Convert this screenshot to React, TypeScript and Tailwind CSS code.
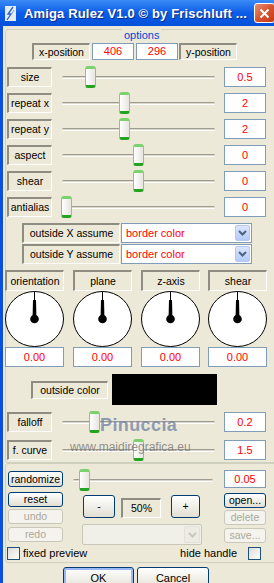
import React from 'react';

const sunken =
  'flex items-center justify-center border-t-2 border-l-2 border-r border-b border-t-[#8f8d82] border-l-[#8f8d82] border-r-white border-b-white text-[10.5px] leading-none text-black whitespace-nowrap';
const valueBox =
  'flex items-center justify-center border border-[#7F9DB9] bg-white text-[11px] leading-none text-[#FF0000]';
const xpBtn =
  'flex items-center justify-center rounded-[3px] border border-[#003C74] bg-gradient-to-b from-white to-[#E2DFD3] text-[10.5px] leading-none text-black';
const xpBtnOff =
  'flex items-center justify-center rounded-[3px] border border-[#C9C7BA] bg-[#F4F3EE] text-[10.5px] leading-none text-[#ACA899]';
const checkbox =
  'h-[13px] w-[13px] shrink-0 border border-[#1C5180] bg-gradient-to-br from-[#DCDCD7] to-white';

function Slider({ at, className }: { at: number; className: string }) {
  return (
    <div className={`relative flex h-[20px] shrink-0 items-center px-[4px] ${className}`}>
      <div className="h-[3px] w-full rounded-full border-t border-b border-t-[#9D9B91] border-b-white bg-[#DCD9CB]" />
      <div
        className="absolute top-[-1px] h-[22px] w-[11px] rounded-[3px] border-x border-t-[3px] border-b-[3px] border-x-[#AFAEA6] border-t-[#7BD16B] border-b-[#22A322] bg-gradient-to-r from-white to-[#E6E5DE]"
        style={{ left: at }}
      />
    </div>
  );
}

function SliderRow({ label, at, value, mt }: { label: string; at: number; value: string; mt: string }) {
  return (
    <div className={`ml-[1px] flex h-[20px] items-center ${mt}`}>
      <div className={`${sunken} h-[20px] w-[45px]`}>{label}</div>
      <Slider at={at} className="ml-[6px] w-[161px]" />
      <div className={`${valueBox} ml-[5px] h-[20px] w-[42px]`}>{value}</div>
    </div>
  );
}

function Chevron({ color }: { color: string }) {
  return (
    <svg width="9" height="6" viewBox="0 0 9 6">
      <path d="M1 1 L4.5 4.5 L8 1" fill="none" stroke={color} strokeWidth="2" />
    </svg>
  );
}

function Assume({ label, mt }: { label: string; mt: string }) {
  return (
    <div className={`ml-[16px] flex h-[20px] ${mt}`}>
      <div className={`${sunken} h-[20px] w-[98px]`}>{label}</div>
      <div className="ml-[1px] flex h-[20px] w-[131px] items-center border border-[#7F9DB9] bg-white pl-[4px] pr-[1px]">
        <span className="flex-1 text-[11px] leading-none text-[#FF0000]">border color</span>
        <div className="flex h-[16px] w-[15px] items-center justify-center rounded-[2px] border border-[#B5C8F3] bg-gradient-to-b from-[#DCE6FD] to-[#B3CAF8]">
          <Chevron color="#4D6185" />
        </div>
      </div>
    </div>
  );
}

function Dial() {
  return (
    <svg width="59" height="56" viewBox="0 0 59 56">
      <ellipse cx="29.5" cy="28" rx="29" ry="27.5" fill="white" stroke="black" />
      <line x1="29.5" y1="0.5" x2="29.5" y2="9" stroke="black" strokeWidth="1" />
      <path d="M28 9 H31 L31.4 25 H27.6 Z" fill="black" />
      <circle cx="29.5" cy="28" r="4.3" fill="black" />
    </svg>
  );
}

function DialCol({ label, ml }: { label: string; ml: string }) {
  return (
    <div className={`flex w-[59px] flex-col ${ml}`}>
      <div className={`${sunken} h-[21px] w-[59px]`}>{label}</div>
      <Dial />
      <div className={`${valueBox} h-[20px] w-[59px]`}>0.00</div>
    </div>
  );
}

function TitleBar() {
  return (
    <div className="flex h-[26px] shrink-0 items-center bg-gradient-to-b from-[#3A8AF6] via-[#0A5CE8] to-[#0552D9] pl-[5px]">
      <svg width="11" height="15" viewBox="0 0 11 15" className="shrink-0">
        <rect x="0" y="0" width="11" height="15" fill="#E4ECF8" />
        <path d="M8 1 L3 8 L6 8 L2 14" fill="none" stroke="#2F5FC8" strokeWidth="1.3" />
        <path d="M9 4 L6 9" stroke="#7FA0E0" strokeWidth="1" />
      </svg>
      <span className="ml-[8px] whitespace-nowrap text-[13px] font-bold leading-none tracking-[0.15px] text-white [text-shadow:1px_1px_#0A2A8A]">
        Amiga Rulez V1.0 © by Frischluft ...
      </span>
      <div className="ml-auto mr-[-1px] flex h-[20px] w-[21px] shrink-0 items-center justify-center rounded-[3px] border border-white bg-gradient-to-br from-[#E98D71] via-[#D8542F] to-[#C23A17]">
        <svg width="11" height="11" viewBox="0 0 11 11">
          <path d="M1.5 1.5 L9.5 9.5 M9.5 1.5 L1.5 9.5" stroke="white" strokeWidth="2" />
        </svg>
      </div>
    </div>
  );
}

function Options() {
  return (
    <div className="relative ml-[2px] mt-[3px] flex h-[434px] w-[275px] shrink-0 flex-col rounded-[3px] border border-[#D0D0BF]">
      <span className="absolute left-[116px] top-[-1px] bg-[#ECE9D8] px-[2px] text-[11px] leading-[13px] text-[#0046D5]">
        options
      </span>

      <div className="ml-[26px] mt-[13px] flex h-[17px]">
        <div className={`${sunken} h-[17px] w-[58px]`}>x-position</div>
        <div className={`${valueBox} ml-[2px] h-[17px] w-[42px]`}>406</div>
        <div className={`${valueBox} ml-[2px] h-[17px] w-[42px]`}>296</div>
        <div className={`${sunken} ml-[1px] h-[17px] w-[58px]`}>y-position</div>
      </div>

      <SliderRow label="size" at={27} value="0.5" mt="mt-[7px]" />
      <SliderRow label="repeat x" at={61} value="2" mt="mt-[6px]" />
      <SliderRow label="repeat y" at={61} value="2" mt="mt-[6px]" />
      <SliderRow label="aspect" at={75} value="0" mt="mt-[6px]" />
      <SliderRow label="shear" at={75} value="0" mt="mt-[6px]" />
      <SliderRow label="antialias" at={3} value="0" mt="mt-[6px]" />

      <Assume label="outside X assume" mt="mt-[6px]" />
      <Assume label="outside Y assume" mt="mt-[1px]" />

      <div className="mt-[6px] flex">
        <DialCol label="orientation" ml="ml-[-1px]" />
        <DialCol label="plane" ml="ml-[9px]" />
        <DialCol label="z-axis" ml="ml-[9px]" />
        <DialCol label="shear" ml="ml-[8px]" />
      </div>

      <div className="mt-[7px] flex h-[31px] items-center">
        <div className={`${sunken} ml-[25px] h-[18px] w-[77px]`}>outside color</div>
        <div className="ml-[4px] h-[31px] w-[105px] bg-black" />
      </div>

      <SliderRow label="falloff" at={31} value="0.2" mt="mt-[7px]" />
      <SliderRow label="f. curve" at={75} value="1.5" mt="mt-[8px]" />
    </div>
  );
}

function Actions() {
  return (
    <div className="ml-[2px] flex h-[100px] w-[275px] shrink-0 flex-col rounded-[3px] border border-[#D0D0BF]">
      <div className="mt-[6px] flex h-[18px] items-start">
        <div className={`${xpBtn} ml-[2px] mt-[1px] h-[16px] w-[55px]`}>randomize</div>
        <Slider at={10} className="ml-[6px] w-[148px]" />
        <div className={`${valueBox} ml-[7px] h-[18px] w-[42px]`}>0.05</div>
      </div>

      <div className="mt-[4px] flex items-start">
        <div className="ml-[2px] flex w-[55px] flex-col">
          <div className={`${xpBtn} h-[15px]`}>reset</div>
          <div className={`${xpBtnOff} mt-[2px] h-[15px]`}>undo</div>
          <div className={`${xpBtnOff} mt-[3px] h-[15px]`}>redo</div>
        </div>

        <div className="ml-[19px] flex w-[120px] flex-col">
          <div className="mt-[3px] flex items-start">
            <div className={`${xpBtn} ml-[1px] h-[23px] w-[32px]`}>-</div>
            <div className={`${sunken} ml-[6px] mt-[3px] h-[20px] w-[40px]`}>50%</div>
            <div className={`${xpBtn} ml-[10px] h-[23px] w-[29px]`}>+</div>
          </div>
          <div className="mt-[6px] flex h-[21px] w-[120px] items-center justify-end rounded-[2px] border border-[#C9C7BA] bg-[#F0EFE8] pr-[1px]">
            <div className="flex h-[17px] w-[16px] items-center justify-center rounded-[2px] border border-[#E2E0D8] bg-[#ECEBE4]">
              <Chevron color="#C9C7BA" />
            </div>
          </div>
        </div>

        <div className="ml-[22px] flex w-[42px] flex-col">
          <div className={`${xpBtn} mt-[1px] h-[15px]`}>open...</div>
          <div className={`${xpBtnOff} mt-[2px] h-[15px]`}>delete</div>
          <div className={`${xpBtnOff} mt-[3px] h-[15px]`}>save...</div>
        </div>
      </div>

      <div className="mt-[2px] flex h-[13px] w-[255px] items-center justify-between">
        <div className="flex items-center">
          <div className={`${checkbox} ml-[1px]`} />
          <span className="ml-[3px] text-[11px] leading-none text-black">fixed preview</span>
        </div>
        <div className="flex items-center">
          <span className="text-[11px] leading-none text-black">hide handle</span>
          <div className={`${checkbox} ml-[11px]`} />
        </div>
      </div>
    </div>
  );
}

export default function App() {
  return (
    <div className="flex h-[583px] w-[274px] flex-col overflow-hidden bg-[#ECE9D8] font-['Liberation_Sans',Arial,sans-serif]">
      <TitleBar />
      <div className="flex min-h-0 flex-1">
        <div className="w-[3px] shrink-0 bg-[#0B50DD]" />
        <div className="relative flex min-w-0 flex-1 flex-col">
          <Options />
          <Actions />
          <div className="ml-[60px] mt-[4px] flex">
            <div className={`${xpBtn} h-[23px] w-[71px] text-[11px] shadow-[inset_0_0_0_2px_#98B8F6]`}>OK</div>
            <div className={`${xpBtn} ml-[3px] h-[23px] w-[72px] text-[11px]`}>Cancel</div>
          </div>

          <span className="absolute left-[97px] top-[390px] whitespace-nowrap text-[18px] font-bold leading-[18px] tracking-[0.4px] text-[#7484A4]/80">
            Pinuccia
          </span>
          <span className="absolute left-[67px] top-[415px] whitespace-nowrap text-[12px] leading-[12px] text-[#777777]/80">
            www.maidiregrafica.eu
          </span>
        </div>
      </div>
    </div>
  );
}
